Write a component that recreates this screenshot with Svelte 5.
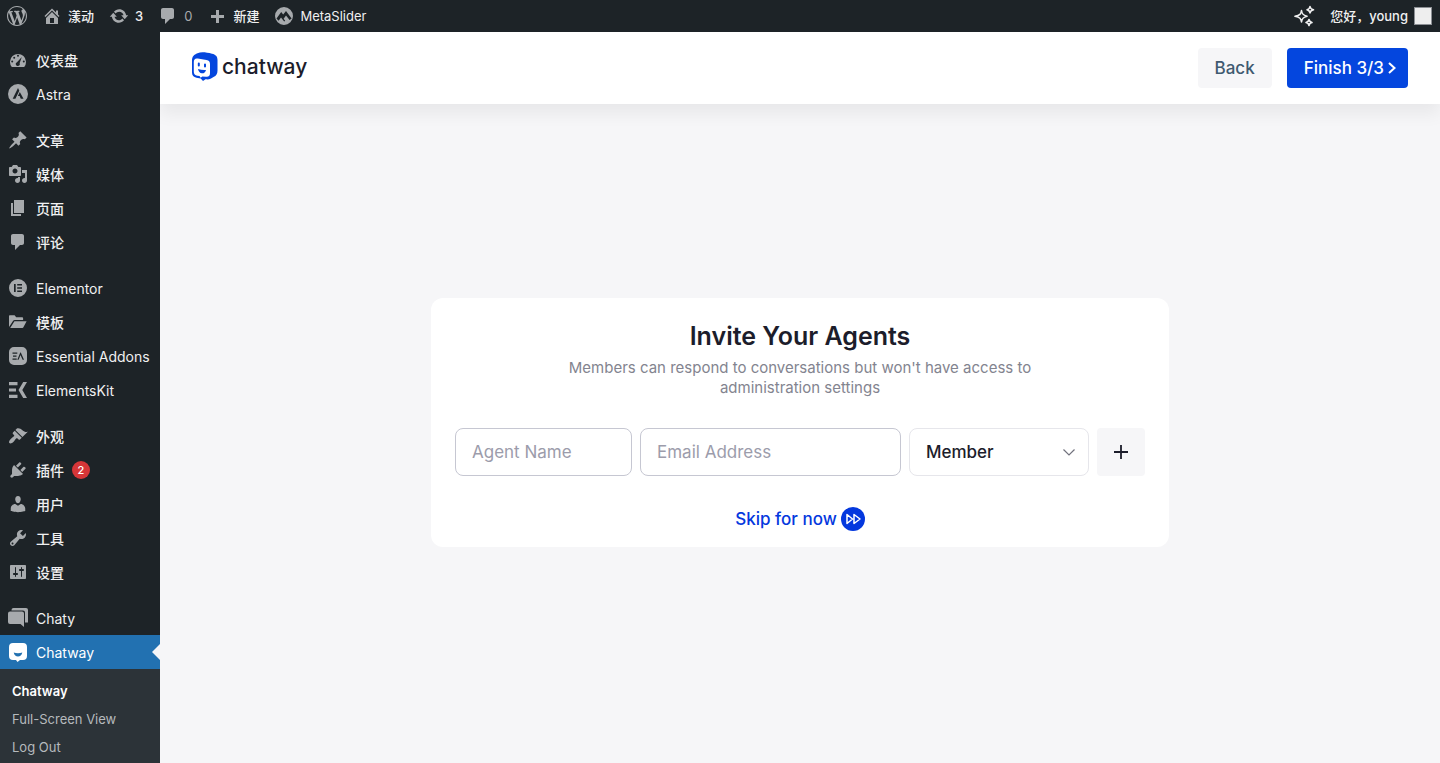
<script>
  let agentName = $state('');
  let email = $state('');
  let role = $state('member');

  const icons = {
    wordpress: 'M20 10c0-5.51-4.49-10-10-10C4.48 0 0 4.49 0 10c0 5.52 4.48 10 10 10 5.51 0 10-4.48 10-10zM7.78 15.37L4.37 6.22c.55-.02 1.17-.08 1.17-.08.5-.06.44-1.13-.06-1.11 0 0-1.45.11-2.37.11-.18 0-.37 0-.58-.01C4.12 2.69 6.87 1.11 10 1.11c2.33 0 4.45.87 6.05 2.34-.68-.11-1.65.39-1.65 1.58 0 .74.45 1.36.9 2.1.35.61.55 1.36.55 2.46 0 1.49-1.4 5-1.4 5l-3.03-8.37c.54-.02.82-.17.82-.17.5-.05.44-1.25-.06-1.22 0 0-1.44.12-2.38.12-.87 0-2.33-.12-2.33-.12-.5-.03-.56 1.2-.06 1.22l.92.08 1.26 3.41zM17.41 10c.24-.64.74-1.87.43-4.25.7 1.29 1.05 2.71 1.05 4.25 0 3.29-1.73 6.24-4.4 7.78.97-2.59 1.94-5.2 2.92-7.78zM6.1 18.09C3.12 16.65 1.11 13.53 1.11 10c0-1.3.23-2.48.72-3.59C3.25 10.3 4.67 14.2 6.1 18.09zm4.03-6.63l2.58 6.98c-.86.29-1.76.45-2.71.45-.79 0-1.57-.11-2.29-.33.81-2.38 1.62-4.74 2.42-7.1z',
    home: 'M16 8.5l1.53 1.53-1.06 1.06L10 4.6l-6.47 6.49-1.06-1.06L10 2.5l4 4v-2h2v4zm-6-2.46l6 5.99V18H4v-5.97zM12 17v-5H8v5h4z',
    update: 'M10.2 3.28c3.53 0 6.43 2.61 6.92 6h2.08l-3.5 4-3.5-4h2.32c-.45-1.97-2.21-3.45-4.32-3.45-1.45 0-2.73.71-3.54 1.78L4.95 5.66C6.23 4.2 8.11 3.28 10.2 3.28zm-.4 13.44c-3.52 0-6.43-2.61-6.92-6H.8l3.5-4c1.17 1.33 2.33 2.67 3.5 4H5.48c.45 1.97 2.21 3.45 4.32 3.45 1.45 0 2.73-.71 3.54-1.78l1.71 1.95c-1.28 1.46-3.15 2.38-5.25 2.38z',
    comments: 'M5 2h9c1.1 0 2 .9 2 2v7c0 1.1-.9 2-2 2h-2l-5 5v-5H5c-1.1 0-2-.9-2-2V4c0-1.1.9-2 2-2z',
    plus: 'M17 9v3h-5v5H9v-5H4V9h5V4h3v5h5z',
    metaslider: 'M10 1a9 9 0 1 0 0 18 9 9 0 0 0 0-18zM2.5 12.6L7.2 6l2 2.6L12 5l5.6 7.4-2 1.6-3.6-4.600-2.400 3.400 1.600 2-1 .8-3.200-4.200-2.400 3.400z',
    dashboard: 'M3.8 17h12.4A8 8 0 1 0 3.8 17zM9 5.8a1 1 0 1 0 2 0 1 1 0 0 0-2 0zM5.2 7.8a1 1 0 1 0 2 0 1 1 0 0 0-2 0zM3.2 11.5a1 1 0 1 0 2 0 1 1 0 0 0-2 0zM14.8 11.5a1 1 0 1 0 2 0 1 1 0 0 0-2 0zM13.8 7L11.6 13.2a2 2 0 1 1-2.6-1z',
    astra: 'M10 0a10 10 0 1 0 0 20 10 10 0 0 0 0-20zM10 4L4.7 14.8h2.7l3.9-8.1zM11.8 8.1l-1.9 4h1.7l1.2 2.7h2.7z',
    post: 'M10.44 3.02l1.82-1.82 6.36 6.35-1.83 1.82c-1.05-.68-2.48-.57-3.41.36l-.75.75c-.92.93-1.04 2.35-.35 3.41l-1.83 1.82-2.41-2.41-2.8 2.79c-.42.42-3.38 2.71-3.8 2.29s1.86-3.39 2.28-3.81l2.79-2.79L4.1 9.36l1.83-1.82c1.05.69 2.48.57 3.4-.36l.75-.75c.93-.92 1.05-2.35.36-3.41z',
    media: 'M13 11V4c0-.55-.45-1-1-1h-1.67L9 1H5L3.67 3H2c-.55 0-1 .45-1 1v7c0 .55.45 1 1 1h10c.55 0 1-.45 1-1zM7 4.5c1.38 0 2.5 1.12 2.5 2.5S8.38 9.5 7 9.5 4.5 8.38 4.5 7 5.62 4.5 7 4.5zM14 6h5v10.5c0 1.38-1.12 2.5-2.5 2.5S14 17.88 14 16.5s1.12-2.5 2.5-2.5c.17 0 .34.02.5.05V9h-3V6zm-4 8.05V13h2v3.5c0 1.38-1.12 2.5-2.5 2.5S7 17.88 7 16.5 8.12 14 9.5 14c.17 0 .34.02.5.05z',
    page: 'M6 15V2h10v13H6zm-1 1h8v2H3V5h2v11z',
    elementor: 'M10 1a9 9 0 1 0 0 18 9 9 0 0 0 0-18zM6 6h1.7v8H6zM9.2 6H14v1.6H9.2zM9.2 9.2H14v1.6H9.2zM9.2 12.4H14V14H9.2z',
    folder: 'M1 15V4.2c0-.6.4-1 1-1h4.6l1.6 2h6c.5 0 .9.4.9.9V8H6.8c-.8 0-1.4.4-1.8 1zM2.2 16l3.9-6.3c.2-.4.5-.5.9-.5h11.6L15.4 15.3c-.2.5-.5.7-1 .7z',
    essential: 'M6 1h8a5 5 0 0 1 5 5v8a5 5 0 0 1-5 5H6a5 5 0 0 1-5-5V6a5 5 0 0 1 5-5zM4.5 6.5h4.8v1.2H4.5zM5 9.5h3.5v1.2H5zM4.5 12.5h4.2v1.2H4.5zM12.3 6.5l-3 7.2h1.3l1.9-4.6 2.1 4.6h1.4l-3.2-7.2z',
    elementskit: 'M1 2h8.5v3.2H1zM1 8.4h7v3.2H1zM1 14.8h8.5V18H1zM15.2 2H19l-4.7 8 4.7 8h-3.8l-4.7-8z',
    appearance: 'M14.48 11.06L7.41 3.99l1.5-1.5c.5-.56 2.3-.47 3.51.32 1.21.8 1.43 1.28 2.91 2.1 1.18.64 2.45 1.26 4.45.85zm-.71.71L6.7 4.7 4.93 6.47c-.39.39-.39 1.02 0 1.41l1.06 1.06c.39.39.39 1.03 0 1.42-.6.6-1.43 1.11-2.21 1.69-.35.26-.7.53-1.01.84C1.43 14.23.4 16.08 1.4 17.07c.99 1 2.84-.03 4.18-1.36.31-.31.58-.66.85-1.02.57-.78 1.08-1.61 1.69-2.21.39-.39 1.02-.39 1.41 0l1.06 1.06c.39.39 1.02.39 1.41 0z',
    plugins: 'M13.11 4.36L9.87 7.6 8 5.73l3.24-3.24c.35-.34 1.05-.2 1.56.32.52.51.66 1.21.31 1.55zm-8 1.77l.91-1.12 9.01 9.01-1.19.84c-.71.71-2.63 1.16-3.82 1.16H6.14L4.9 17.26c-.59.59-1.54.59-2.12 0-.59-.58-.59-1.53 0-2.12l1.24-1.24v-3.88c0-1.13.4-3.19 1.09-3.89zm7.26 3.97l3.24-3.24c.34-.35 1.04-.21 1.55.31.52.51.66 1.21.31 1.55l-3.24 3.25z',
    users: 'M10 9.25c-2.27 0-2.73-3.44-2.73-3.44C7 4.02 7.82 2 9.97 2c2.16 0 2.98 2.02 2.71 3.81 0 0-.41 3.44-2.68 3.44zm0 2.57L12.72 10c2.39 0 4.52 2.33 4.52 4.53v2.49s-3.65 1.13-7.24 1.13c-3.65 0-7.24-1.13-7.24-1.13v-2.49c0-2.25 1.94-4.48 4.47-4.48z',
    tools: 'M16.68 9.77c-1.34 1.34-3.3 1.67-4.95.99l-5.41 6.52c-.99.99-2.59.99-3.58 0s-.99-2.59 0-3.57l6.52-5.42c-.68-1.65-.35-3.61.99-4.95 1.28-1.28 3.12-1.62 4.72-1.06l-2.89 2.89 2.82 2.82 2.86-2.87c.53 1.58.18 3.39-1.08 4.65zM3.81 16.21c.4.39 1.04.39 1.43 0 .4-.4.4-1.04 0-1.43-.39-.4-1.03-.4-1.43 0-.39.39-.39 1.03 0 1.43z',
    settings: 'M18 16V4c0-.55-.45-1-1-1H3c-.55 0-1 .45-1 1v12c0 .55.45 1 1 1h14c.55 0 1-.45 1-1zM8 11h1c.55 0 1 .45 1 1s-.45 1-1 1H8v1.5c0 .28-.22.5-.5.5s-.5-.22-.5-.5V13H6c-.55 0-1-.45-1-1s.45-1 1-1h1V5.5c0-.28.22-.5.5-.5s.5.22.5.5V11zm5-2h-1c-.55 0-1-.45-1-1s.45-1 1-1h1V5.5c0-.28.22-.5.5-.5s.5.22.5.5V7h1c.55 0 1 .45 1 1s-.45 1-1 1h-1v5.5c0 .28-.22.5-.5.5s-.5-.22-.5-.5V9z',
    chaty: 'M2 3.5h12a2 2 0 0 1 2 2V19l-3.5-3H2a2 2 0 0 1-2-2V5.5a2 2 0 0 1 2-2zM3.5 2.6V2a2 2 0 0 1 2-2H18a2 2 0 0 1 2 2v12.5h-3V4.6a2 2 0 0 0-2-2z',
    chatway: 'M5 1h10a4 4 0 0 1 4 4v9a4 4 0 0 1-4 4h-3l-2.5 2L8 18H5a4 4 0 0 1-4-4V5a4 4 0 0 1 4-4zM5.7 10.6c.5 2.6 2.2 3.9 4.3 3.9s3.8-1.300 4.300-3.900c-2.600 1-6 1-8.600 0z'
  };

  const menu = [
    [
      { label: '仪表盘', icon: 'dashboard' },
      { label: 'Astra', icon: 'astra' }
    ],
    [
      { label: '文章', icon: 'post' },
      { label: '媒体', icon: 'media' },
      { label: '页面', icon: 'page' },
      { label: '评论', icon: 'comments' }
    ],
    [
      { label: 'Elementor', icon: 'elementor' },
      { label: '模板', icon: 'folder' },
      { label: 'Essential Addons', icon: 'essential' },
      { label: 'ElementsKit', icon: 'elementskit' }
    ],
    [
      { label: '外观', icon: 'appearance' },
      { label: '插件', icon: 'plugins', count: 2 },
      { label: '用户', icon: 'users' },
      { label: '工具', icon: 'tools' },
      { label: '设置', icon: 'settings' }
    ],
    [
      { label: 'Chaty', icon: 'chaty' },
      { label: 'Chatway', icon: 'chatway', active: true }
    ]
  ];

  const isLatin = (text) => /^[a-z]/i.test(text);
</script>

{#snippet icon(name)}
  <svg class="icon" viewBox="0 0 20 20" width="20" height="20" aria-hidden="true">
    <path d={icons[name]} fill="currentColor" fill-rule="evenodd" />
  </svg>
{/snippet}

<div class="page">
  <header class="adminbar">
    <nav class="bar-links">
      <a href="#about" aria-label="WordPress">{@render icon('wordpress')}</a>
      <a href="#site">{@render icon('home')}<span>漾动</span></a>
      <a href="#updates">{@render icon('update')}<span>3</span></a>
      <a href="#comments" class="muted">{@render icon('comments')}<span>0</span></a>
      <a href="#new">{@render icon('plus')}<span>新建</span></a>
      <a href="#metaslider">{@render icon('metaslider')}<span class="latin">MetaSlider</span></a>
    </nav>
    <div class="bar-account">
      <a href="#ai" class="sparkles" aria-label="AI">
        <svg viewBox="0 0 22 22" width="22" height="22" fill="none" stroke="currentColor" stroke-width="1.6" stroke-linejoin="round">
          <path d="M8.5 5.5C9 9 10 10.3 14 11.3c-4 1-5 2.3-5.500 5.700C8 13.600 7 12.300 2 11.300 7 10.300 8 9 8.500 5.500z" />
          <path d="M17 1.500c.3 2 .9 2.800 3.500 3.300-2.600.5-3.200 1.300-3.500 3.200-.3-1.900-.9-2.700-3-3.200 2.100-.5 2.700-1.300 3-3.300z" />
          <path d="M16 14.500c.3 1.800.8 2.400 3 3-2.200.5-2.700 1.200-3 3-.3-1.800-.8-2.500-3-3 2.200-.6 2.700-1.200 3-3z" />
        </svg>
      </a>
      <a href="#profile" class="profile"><span>您好，young</span><span class="avatar"></span></a>
    </div>
  </header>

  <div class="body">
    <aside class="sidebar">
      {#each menu as group}
        <ul class="group">
          {#each group as item}
            <li>
              <a href="#{item.icon}" class="item" class:active={item.active}>
                {@render icon(item.icon)}
                <span class:latin={isLatin(item.label)}>{item.label}</span>
                {#if item.count}<span class="count">{item.count}</span>{/if}
              </a>
            </li>
          {/each}
        </ul>
      {/each}
      <ul class="submenu">
        <li><a href="#chatway" class="current">Chatway</a></li>
        <li><a href="#fullscreen">Full-Screen View</a></li>
        <li><a href="#logout">Log Out</a></li>
      </ul>
    </aside>

    <div class="content">
      <div class="topbar">
        <a href="#chatway" class="brand">
          <svg viewBox="0 0 26 29" width="26" height="29" aria-hidden="true">
            <path d="M0 8.500C0 4.500 2 2.600 5.500 1.200 9-.2 14 .2 20 1.800c3.500.9 5.500 2.500 5.500 6.200v10.500c0 3.500-1.200 5-4 6.600l-2.500 1.400c-1.700.9-3.200 1-5.500.8L11 29l-2.300-2.500-4.200-.8C1.500 25 0 23.500 0 20.500z" fill="#0446de" />
            <path d="M1.800 10c0-2.800 1.400-4 4-3.500l8.700 1.400c2.500.4 3.500 1.700 3.500 4.200v9c0 3-1.200 4-4 3.700l-3.700-.4-1.600 1.400-1.200-1.700-2.200-.4c-2.300-.5-3.500-1.600-3.500-4z" fill="#fff" />
            <path d="M6.800 11.500v2M13 12.500v2" stroke="#0446de" stroke-width="2" stroke-linecap="round" />
            <path d="M6 17c2.700.9 5 1.200 8 1-.7 2.600-2.200 3.500-4.100 3.300-2-.2-3.400-1.700-3.900-4.300z" fill="#0446de" />
          </svg>
          <span>chatway</span>
        </a>
        <div class="actions">
          <button type="button" class="btn back">Back</button>
          <button type="button" class="btn finish">
            Finish 3/3
            <svg viewBox="0 0 8 14" width="8" height="14" fill="none" stroke="currentColor" stroke-width="2" aria-hidden="true">
              <path d="M1 2l5.500 5L1 12" />
            </svg>
          </button>
        </div>
      </div>

      <main>
        <form class="card" onsubmit={(e) => e.preventDefault()}>
          <h1>Invite Your Agents</h1>
          <p>Members can respond to conversations but won't have access to administration settings</p>
          <div class="fields">
            <input type="text" aria-label="Agent Name" placeholder="Agent Name" bind:value={agentName} />
            <input type="email" aria-label="Email Address" placeholder="Email Address" bind:value={email} />
            <div class="role">
              <select aria-label="Role" bind:value={role}>
                <option value="member">Member</option>
                <option value="admin">Admin</option>
              </select>
              <svg viewBox="0 0 12 12" width="12" height="12" fill="none" stroke="#71727d" stroke-width="1.200" aria-hidden="true">
                <path d="M0.500 3.500L6 9l5.500-5.500" />
              </svg>
            </div>
            <button type="button" class="add" aria-label="Add agent">
              <svg viewBox="0 0 16 16" width="16" height="16" stroke="currentColor" stroke-width="1.800" aria-hidden="true">
                <path d="M8 1v14M1 8h14" />
              </svg>
            </button>
          </div>
          <a href="#skip" class="skip">
            <span>Skip for now</span>
            <svg viewBox="0 0 24 24" width="24" height="24" aria-hidden="true">
              <circle cx="12" cy="12" r="12" fill="#0438de" />
              <path d="M6 7.500v9l5.500-4.500zM13 7.500v9l6-4.500z" fill="none" stroke="#fff" stroke-width="1.500" stroke-linejoin="round" />
            </svg>
          </a>
        </form>
      </main>
    </div>
  </div>
</div>

<style>
  :global(body) {
    background: #f6f6f8;
  }

  .page {
    display: flex;
    flex-direction: column;
    height: 100vh;
    overflow: hidden;
    font-family: Inter, 'Noto Sans CJK SC', sans-serif;
  }

  a {
    color: inherit;
    text-decoration: none;
  }

  ul {
    list-style: none;
    margin: 0;
    padding: 0;
  }

  svg {
    display: block;
    flex: none;
  }

  .icon {
    color: #a7aaad;
  }

  .latin {
    font-weight: 400;
  }

  .adminbar {
    display: flex;
    justify-content: space-between;
    align-items: center;
    flex: none;
    height: 32px;
    padding: 0 8px 0 7px;
    background: #1d2327;
    color: #f0f0f1;
    font-size: 13px;
    font-weight: 500;
    line-height: 32px;
  }

  .bar-links,
  .bar-account {
    display: flex;
    gap: 15px;
  }

  .bar-links a,
  .profile,
  .sparkles {
    display: flex;
    align-items: center;
    gap: 6px;
  }

  .muted {
    color: #a7aaad;
    font-weight: 400;
  }

  .avatar {
    width: 16px;
    height: 16px;
    border: 1px solid #8c8f94;
    background: #eee;
  }

  .body {
    display: flex;
    flex: 1;
    min-height: 0;
  }

  .sidebar {
    flex: none;
    width: 160px;
    padding-top: 11px;
    background: #1d2327;
    color: #f0f0f1;
    font-size: 14px;
    font-weight: 500;
    overflow: hidden;
  }

  .group + .group {
    margin-top: 12px;
  }

  .item {
    position: relative;
    display: flex;
    align-items: center;
    gap: 8px;
    height: 34px;
    padding-left: 8px;
    white-space: nowrap;
  }

  .active {
    background: #2271b1;
    color: #fff;
  }

  .active .icon {
    color: #fff;
  }

  .active::after {
    content: '';
    position: absolute;
    top: 9px;
    right: 0;
    border: 8px solid transparent;
    border-left: 0;
    border-right-color: #f6f6f8;
  }

  .count {
    width: 18px;
    border-radius: 9px;
    background: #d63638;
    color: #fff;
    font-size: 11px;
    line-height: 18px;
    text-align: center;
  }

  .submenu {
    height: 100%;
    padding: 8px 12px;
    background: #2c3338;
    color: #b6babd;
    font-size: 13px;
    font-weight: 400;
    line-height: 28px;
  }

  .current {
    color: #fff;
    font-weight: 600;
  }

  .content {
    display: flex;
    flex-direction: column;
    flex: 1;
    min-width: 0;
    overflow: hidden;
  }

  .topbar {
    display: flex;
    justify-content: space-between;
    align-items: center;
    flex: none;
    height: 72px;
    padding: 0 32px;
    background: #fff;
    box-shadow: 0 10px 16px rgba(0, 0, 0, 0.06);
  }

  .brand {
    display: flex;
    align-items: center;
    gap: 4px;
    padding-bottom: 3px;
    color: #1c1d2b;
    font-size: 21px;
    font-weight: 500;
    line-height: 24px;
  }

  .actions {
    display: flex;
    gap: 15px;
  }

  .btn {
    display: flex;
    align-items: center;
    gap: 4px;
    height: 40px;
    padding: 0 17px;
    border: 0;
    border-radius: 4px;
    font-family: inherit;
    font-size: 17px;
    font-weight: 500;
  }

  .back {
    background: #f6f6f8;
    color: #3f5a70;
  }

  .finish {
    padding-right: 12px;
    background: #0446de;
    color: #fff;
  }

  main {
    display: flex;
    align-items: center;
    justify-content: center;
    flex: 1;
    padding: 0 24px 22px;
  }

  .card {
    display: flex;
    flex-direction: column;
    align-items: center;
    box-sizing: border-box;
    width: 100%;
    max-width: 738px;
    padding: 20px 24px 16px;
    border-radius: 12px;
    background: #fff;
  }

  h1 {
    margin: 0;
    color: #1c1d2b;
    font-size: 25px;
    font-weight: 600;
    line-height: 36px;
  }

  p {
    max-width: 480px;
    margin: 4px 0 30px;
    color: #83848f;
    font-size: 15px;
    line-height: 20px;
    text-align: center;
  }

  .fields {
    display: grid;
    grid-template-columns: 177fr 261fr 180px 48px;
    gap: 8px;
    width: 100%;
  }

  input,
  select {
    box-sizing: border-box;
    width: 100%;
    height: 48px;
    padding: 0 16px;
    border: 1px solid #c6c7d2;
    border-radius: 8px;
    background: #fff;
    color: #1c1d2b;
    font-family: inherit;
    font-size: 17px;
  }

  input::placeholder {
    color: #9c9cab;
    opacity: 1;
  }

  .role {
    display: grid;
    align-items: center;
  }

  .role > * {
    grid-area: 1 / 1;
  }

  .role svg {
    justify-self: end;
    margin-right: 14px;
    pointer-events: none;
  }

  select {
    appearance: none;
    border-color: #e6e6eb;
    font-weight: 500;
  }

  .add {
    display: grid;
    place-items: center;
    height: 48px;
    padding: 0;
    border: 0;
    border-radius: 4px;
    background: #f6f6f8;
    color: #1c1d2b;
  }

  .skip {
    display: flex;
    align-items: center;
    gap: 4px;
    margin-top: 31px;
    color: #0438de;
    font-size: 17px;
    font-weight: 500;
    line-height: 24px;
  }
</style>
